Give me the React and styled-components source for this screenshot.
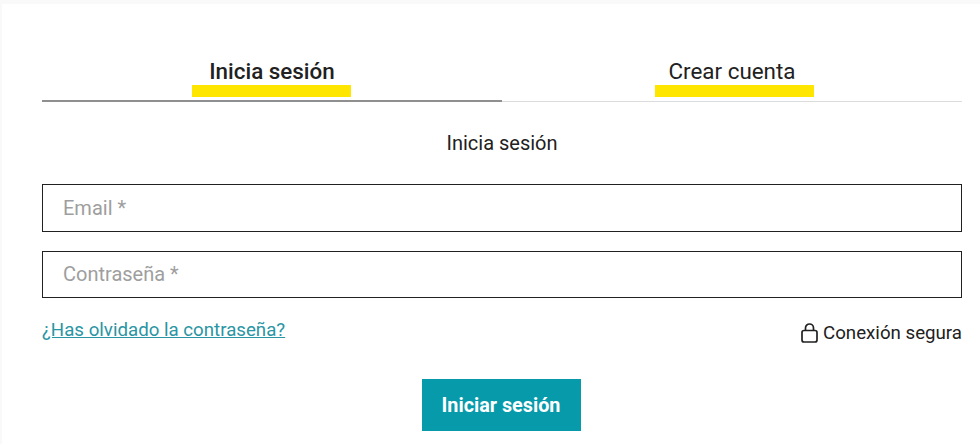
import React from 'react';
import styled, { createGlobalStyle } from 'styled-components';

const GlobalStyle = createGlobalStyle`
  html, body {
    margin: 0;
    padding: 0;
    background: #f9f9f9;
  }
  * {
    box-sizing: border-box;
  }
`;

const Page = styled.div`
  width: 980px;
  height: 444px;
  overflow: hidden;
  padding: 4px 0 0 2px;
  font-family: Roboto, "Liberation Sans", sans-serif;
  color: #212121;
`;

const Panel = styled.main`
  background: #fff;
  height: 440px;
  padding: 47px 18px 0 40px;
`;

const Tabs = styled.nav`
  display: flex;
`;

const Tab = styled.a`
  flex: 1;
  height: 51px;
  padding-top: 6px;
  display: flex;
  flex-direction: column;
  align-items: center;
  border-bottom: ${(props) => (props.active ? '2px solid #8f8f8f' : '1px solid #dcdcdc')};
  font-size: 22.4px;
  line-height: 28px;
  font-weight: ${(props) => (props.active ? 500 : 400)};
`;

const Highlight = styled.span`
  display: block;
  width: 159px;
  height: 12px;
  margin-left: ${(props) => props.shift}px;
  background: #ffe600;
`;

const Heading = styled.h2`
  margin: 26px 0 26px;
  text-align: center;
  font-size: 20px;
  line-height: 30px;
  font-weight: 400;
`;

const Field = styled.input`
  display: block;
  width: 100%;
  height: ${(props) => props.h}px;
  margin-bottom: ${(props) => props.mb}px;
  padding: 0 20px ${(props) => props.pb}px;
  border: 1px solid #212121;
  border-radius: 0;
  outline: none;
  font-family: inherit;
  font-size: 20px;
  color: #212121;

  &::placeholder {
    color: #9e9e9e;
    opacity: 1;
  }
`;

const Row = styled.div`
  display: flex;
  justify-content: space-between;
  align-items: flex-start;
  margin-top: 19px;
`;

const ForgotLink = styled.a`
  font-size: 18.7px;
  line-height: 26px;
  color: #2a95a3;
  text-decoration: underline;
`;

const Secure = styled.span`
  display: flex;
  align-items: center;
  gap: 5px;
  margin-top: 3px;
  font-size: 18.7px;
  line-height: 26px;
`;

const LockIcon = styled.svg`
  width: 17px;
  height: 20px;
  fill: none;
  stroke: #212121;
  stroke-width: 1.7;
`;

const Actions = styled.div`
  display: flex;
  justify-content: center;
  padding-right: 2px;
  margin-top: 33px;
`;

const Submit = styled.button`
  width: 159px;
  height: 52px;
  padding: 0;
  border: none;
  border-radius: 0;
  background: #069aaa;
  color: #fff;
  font-family: inherit;
  font-size: 19.8px;
  font-weight: 700;
`;

export default function App() {
  return (
    <Page>
      <GlobalStyle />
      <Panel>
        <Tabs>
          <Tab active>
            Inicia sesión
            <Highlight shift={-2} />
          </Tab>
          <Tab>
            Crear cuenta
            <Highlight shift={4} />
          </Tab>
        </Tabs>

        <Heading>Inicia sesión</Heading>

        <Field placeholder="Email *" h={48} mb={19} pb={0} />
        <Field placeholder="Contraseña *" h={47} mb={0} pb={2} />

        <Row>
          <ForgotLink href="#">¿Has olvidado la contraseña?</ForgotLink>
          <Secure>
            <LockIcon viewBox="0 0 17 20">
              <rect x="1" y="7.5" width="15" height="11.5" rx="2" />
              <path d="M4.5 7.5V5a4 4 0 0 1 8 0v2.5" />
            </LockIcon>
            Conexión segura
          </Secure>
        </Row>

        <Actions>
          <Submit>Iniciar sesión</Submit>
        </Actions>
      </Panel>
    </Page>
  );
}
